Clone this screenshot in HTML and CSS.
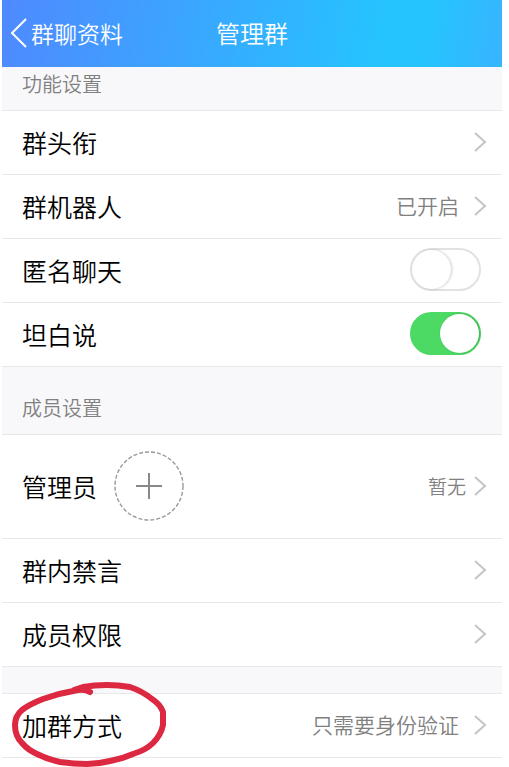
FILE: index.html
```
<!DOCTYPE html>
<html lang="zh-CN">

<head>
    <meta charset="UTF-8">
    <meta name="viewport" content="width=device-width, initial-scale=1">
    <title>管理群</title>
    <link rel="stylesheet" href="styles.css">
</head>

<body>
    <!-- 公用箭头 -->
    <svg class="symbols" aria-hidden="true">
        <symbol id="arrow" viewBox="0 0 14 22">
            <path d="M2 2 L12 11 L2 20" fill="none" stroke="currentColor" stroke-width="2" />
        </symbol>
    </svg>

    <header class="header">
        <a class="back" href="#">
            <svg class="back-icon" viewBox="0 0 18 30" aria-hidden="true">
                <path d="M16 1 L2 15 L16 29" fill="none" stroke="currentColor" stroke-width="2" />
            </svg>
            群聊资料
        </a>
        <h1>管理群</h1>
    </header>

    <main>
        <h2>功能设置</h2>
        <ul>
            <li><a class="row" href="#"><span class="name">群头衔</span><svg class="arrow"><use href="#arrow" /></svg></a></li>
            <li><a class="row" href="#"><span class="name">群机器人</span><span class="value">已开启</span><svg class="arrow"><use href="#arrow" /></svg></a></li>
            <li><label class="row"><span class="name">匿名聊天</span><input class="switch" type="checkbox"></label></li>
            <li><label class="row"><span class="name">坦白说</span><input class="switch" type="checkbox" checked></label></li>
        </ul>

        <h2 class="spaced">成员设置</h2>
        <ul>
            <li class="row admin">
                <span class="name">管理员</span>
                <button class="add" type="button" aria-label="添加管理员">
                    <svg viewBox="0 0 72 72" aria-hidden="true">
                        <circle cx="36" cy="36" r="34" fill="none" stroke="#999" stroke-width="1.4" stroke-dasharray="4 2" />
                        <path d="M36 23 V49 M23 36 H49" fill="none" stroke="#888" stroke-width="2" />
                    </svg>
                </button>
                <a class="more" href="#"><span class="none">暂无</span><svg class="arrow"><use href="#arrow" /></svg></a>
            </li>
            <li><a class="row" href="#"><span class="name">群内禁言</span><svg class="arrow"><use href="#arrow" /></svg></a></li>
            <li><a class="row" href="#"><span class="name">成员权限</span><svg class="arrow"><use href="#arrow" /></svg></a></li>
        </ul>

        <ul class="join">
            <li>
                <a class="row" href="#"><span class="name">加群方式</span><span class="value">只需要身份验证</span><svg class="arrow"><use href="#arrow" /></svg></a>
                <!-- 手绘红圈 -->
                <svg class="mark" viewBox="8 680 164 87" aria-hidden="true">
                    <path d="M90 692 Q86 689 78 690 Q60 693 43 699 Q30 704 22 710 Q15 716 15 725 Q15 736 22 743 Q28 750 37 754 Q47 759 60 762 Q74 764 87 764 Q98 764 110 761 Q122 759 133 754 Q146 750 153 743 Q161 735 163 725 L163 712 Q160 704 152 699 Q142 691 130 687 Q118 685 107 685 Q94 685 83 687 L74 690" />
                </svg>
            </li>
        </ul>
    </main>
</body>

</html>
```

FILE: styles.css
```
* {
    box-sizing: border-box;
    padding: 0;
    margin: 0;
}

body {
    min-height: 100vh;
    padding: 0 7px 9px 2px;
    background: #fff;
    color: #000;
    font-family: "Noto Sans CJK SC", sans-serif;
    font-weight: 350;
}

ul {
    list-style: none;
}

a {
    color: inherit;
    text-decoration: none;
}

.symbols {
    display: none;
}

.header {
    display: grid;
    grid-template-columns: 1fr auto 1fr;
    align-items: center;
    height: 67px;
    padding: 0 8px 2px;
    background: linear-gradient(100deg, #4f89ff, #25c4ff 76%, #25c4ff 84%, #38b4ff);
    color: #fff;
}

.header h1 {
    font-size: 24px;
    font-weight: 350;
}

.back {
    display: flex;
    align-items: center;
    gap: 3px;
    font-size: 23px;
}

.back-icon {
    width: 18px;
    height: 30px;
}

h2 {
    padding: 3px 20px 12px;
    border-bottom: 1px solid #e8e8ec;
    background: #f8f8fb;
    color: #808080;
    font-size: 20px;
    font-weight: 350;
    line-height: 28px;
}

h2.spaced {
    padding-top: 27px;
}

.row {
    display: flex;
    align-items: center;
    min-height: 64px;
    padding: 0 15px 2px 20px;
    border-bottom: 1px solid #e8e8ea;
}

.name {
    font-size: 25px;
    line-height: 36px;
}

.value {
    padding-bottom: 2px;
    margin-left: auto;
    color: #808080;
    font-size: 21px;
}

.arrow {
    flex: none;
    width: 14px;
    height: 22px;
    margin-left: auto;
    color: #c4c4c6;
}

.value + .arrow {
    margin-left: 14px;
}

.switch {
    display: flex;
    align-items: center;
    flex: none;
    width: 71px;
    height: 43px;
    margin: 0 6px 0 auto;
    border: 2px solid #e2e2e2;
    border-radius: 22px;
    background: #fff;
    appearance: none;
}

.switch::before {
    content: "";
    width: 39px;
    height: 39px;
    border-radius: 50%;
    background: #fff;
    box-shadow: 1px 0 3px rgba(0, 0, 0, .2);
}

.switch:checked {
    justify-content: flex-end;
    border-color: #4cd964;
    background: #4cd964;
}

.admin {
    min-height: 104px;
}

.add {
    width: 72px;
    height: 72px;
    margin-left: 16px;
    border: 0;
    background: none;
}

.add svg {
    display: block;
}

.more {
    display: flex;
    align-items: center;
    gap: 7px;
    margin-left: auto;
}

.none {
    color: #808080;
    font-size: 19px;
}

.join {
    border-top: 27px solid #f8f8fb;
}

.join li {
    position: relative;
    box-shadow: 0 -1px #e8e8ec;
}

.mark {
    position: absolute;
    top: -14px;
    left: 6px;
    width: 164px;
    height: 87px;
    fill: none;
    stroke: #dc2840;
    stroke-width: 6;
    stroke-linecap: round;
    stroke-linejoin: round;
    pointer-events: none;
}
```
